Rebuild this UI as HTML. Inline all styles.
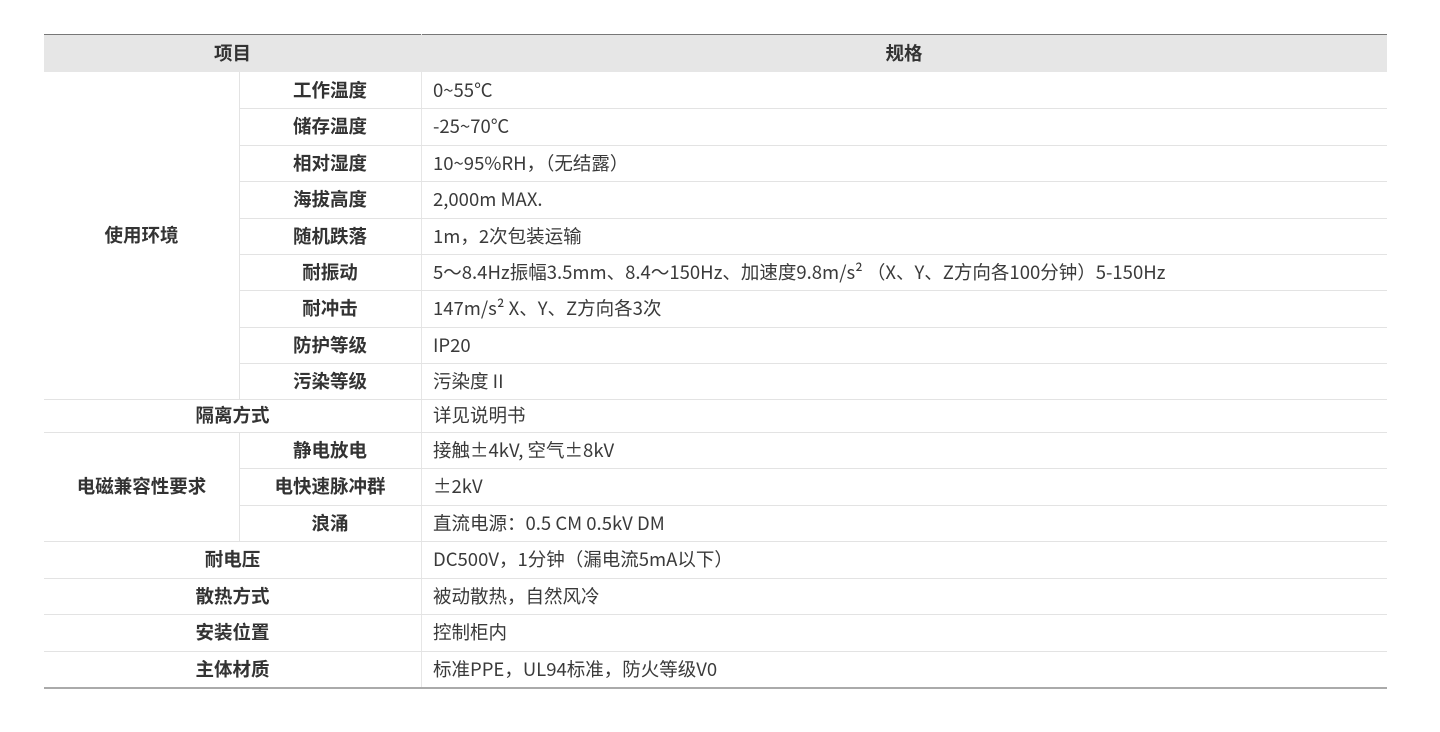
<!DOCTYPE html>
<html><head><meta charset="utf-8"><style>
body{margin:0;width:1440px;height:732px;background:#fff;position:relative;overflow:hidden;font-family:"Noto Sans CJK SC","Liberation Sans",sans-serif;color:#333;font-size:18.5px}
.c{position:absolute;display:flex;align-items:center;box-sizing:border-box;line-height:1;white-space:nowrap}
.b{font-weight:bold;justify-content:center;color:#333}
.v{padding-left:12px;color:#3a3a3a}
.h{position:absolute;height:1px;background:#e3e3e3}
.vl{position:absolute;width:1px;background:#e3e3e3}
</style></head><body>
<div style="position:absolute;left:44px;top:34px;width:1343px;height:38px;background:#e6e6e6;border-top:1px solid #777;box-sizing:border-box"></div>
<div class="c b" style="left:44px;top:34px;width:377px;height:38px">项目</div>
<div class="c b" style="left:421px;top:34px;width:966px;height:38px">规格</div>
<div class="vl" style="left:421px;top:34px;height:654px;background:#e6e6e6"></div>
<div class="vl" style="left:239px;top:72px;height:327px"></div>
<div class="vl" style="left:239px;top:432px;height:109px"></div>
<div id="g"></div>
<div style="position:absolute;left:44px;top:687px;width:1343px;height:2px;background:#aaa"></div>
<script>
var ys=[72,108,145,181,218,254,290,327,363,399,432,468,505,541,578,614,651,687];
var sub=["工作温度","储存温度","相对湿度","海拔高度","随机跌落","耐振动","耐冲击","防护等级","污染等级"];
var val=["0~55℃","-25~70℃","10~95%RH，（无结露）","2,000m MAX.","1m，2次包装运输","5～8.4Hz振幅3.5mm、8.4～150Hz、加速度9.8m/s² （X、Y、Z方向各100分钟）5-150Hz","147m/s² X、Y、Z方向各3次","IP20","污染度 II","详见说明书","接触±4kV, 空气±8kV","±2kV","直流电源：0.5 CM 0.5kV DM","DC500V，1分钟（漏电流5mA以下）","被动散热，自然风冷","控制柜内","标准PPE，UL94标准，防火等级V0"];
var h="";
for(var i=0;i<17;i++){var t=ys[i],hh=ys[i+1]-t;
h+='<div class="c v" style="left:421px;top:'+t+'px;width:966px;height:'+hh+'px">'+val[i]+'</div>';
if(i<9)h+='<div class="c b" style="left:239px;top:'+t+'px;width:182px;height:'+hh+'px">'+sub[i]+'</div>';
if(i>=10&&i<=12)h+='<div class="c b" style="left:239px;top:'+t+'px;width:182px;height:'+hh+'px">'+["静电放电","电快速脉冲群","浪涌"][i-10]+'</div>';
if(i>0){var lx=(i<9||(i>10&&i<13))?239:44;h+='<div class="h" style="left:'+lx+'px;top:'+t+'px;width:'+(1387-lx)+'px"></div>';}
}
var full=[[9,"隔离方式"],[13,"耐电压"],[14,"散热方式"],[15,"安装位置"],[16,"主体材质"]];
full.forEach(function(f){var t=ys[f[0]];h+='<div class="c b" style="left:44px;top:'+t+'px;width:377px;height:'+(ys[f[0]+1]-t)+'px">'+f[1]+'</div>';});
h+='<div class="c b" style="left:44px;top:72px;width:195px;height:327px">使用环境</div>';
h+='<div class="c b" style="left:44px;top:432px;width:195px;height:109px">电磁兼容性要求</div>';
document.getElementById("g").innerHTML=h;
</script>
</body></html>
